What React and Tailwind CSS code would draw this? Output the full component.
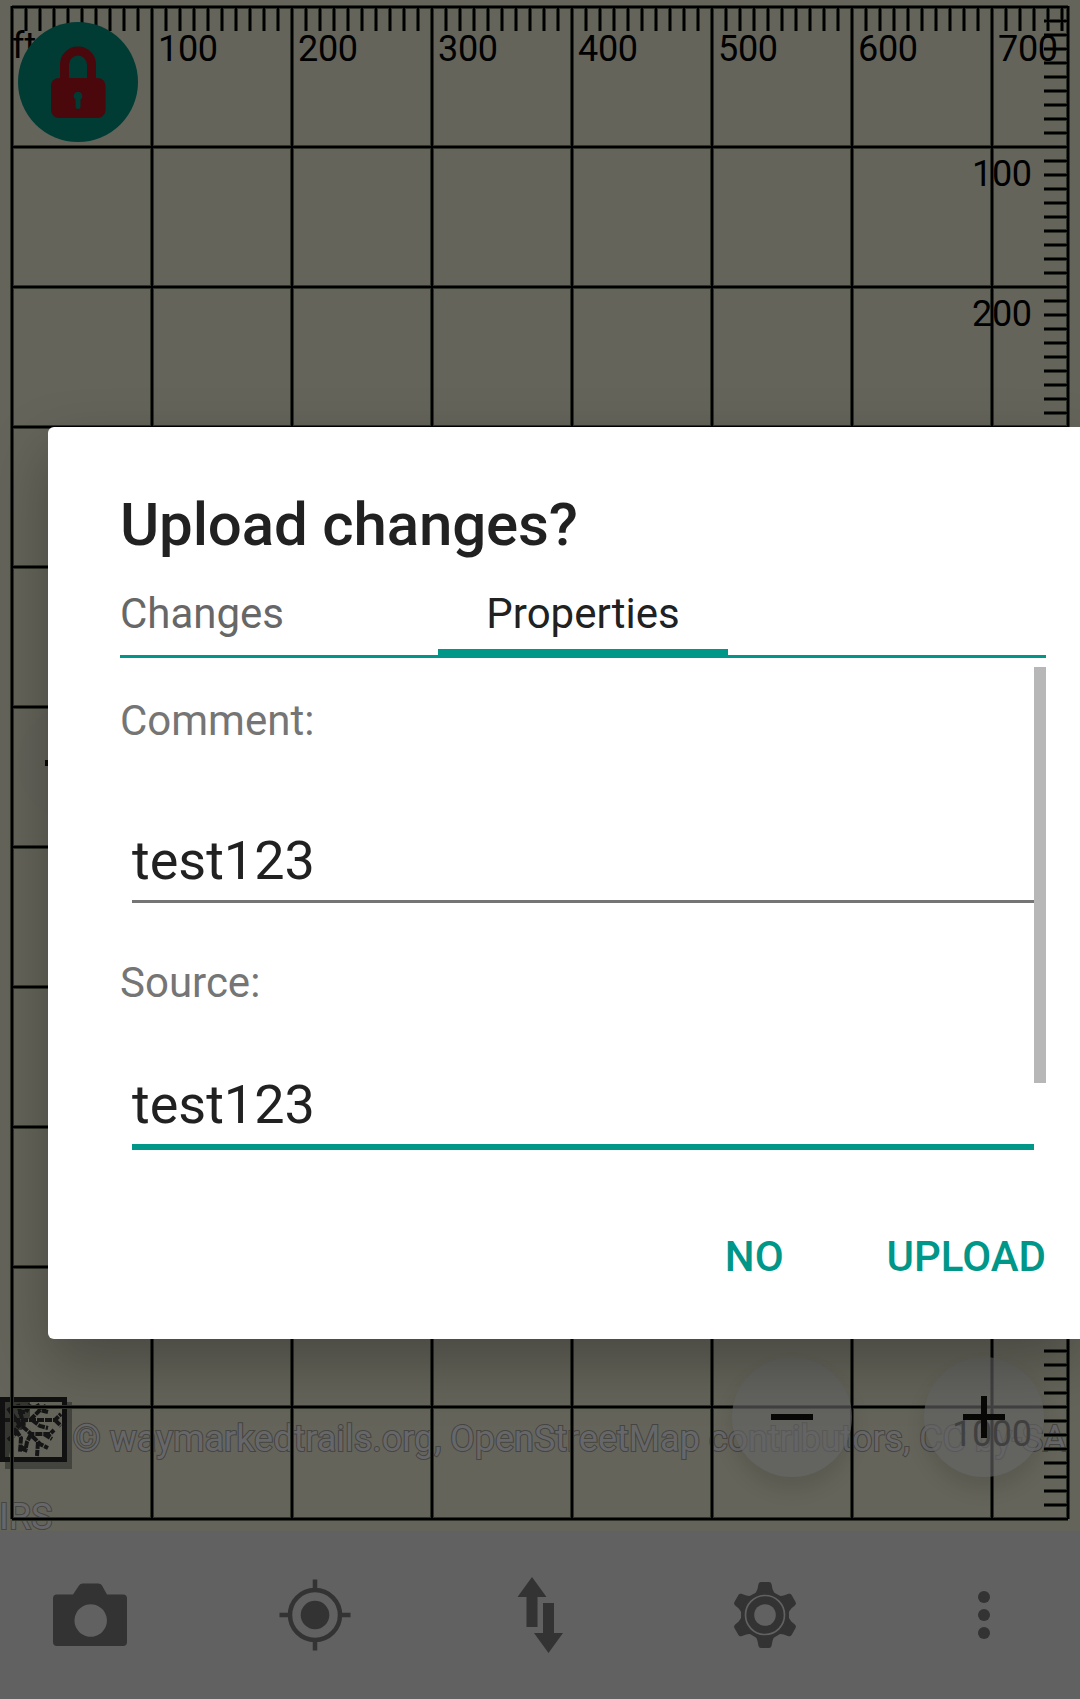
const LINE = "#000000";
const RIM = "#2f3229";
const range = (n) => Array.from({ length: n }, (_, i) => i);

const verticals = [...range(8).map((i) => 12 + i * 140), 1068];
const horizontals = [...range(11).map((i) => 7 + i * 140), 1519];
const topTicks = range(76).map((i) => 12 + i * 14);
const sideTicks = range(107)
  .map((i) => 21 + i * 14)
  .filter((y) => (y - 7) % 140 !== 0 && y < 1512);

const gridPath =
  verticals.map((x) => `M${x} 6V1519`).join("") + horizontals.map((y) => `M12 ${y}H1068`).join("");
const tickPath =
  topTicks.map((x) => `M${x} 7V31`).join("") + sideTicks.map((y) => `M1044 ${y}H1068`).join("");

function MapCanvas() {
  return (
    <svg className="block h-[1531px] w-[1080px]" viewBox="0 0 1080 1531" fontFamily="Roboto, sans-serif" fontSize="36">
      <rect width="1080" height="1531" fill="#64645a" />
      <g fill="#67676a" stroke="#454541" strokeWidth="2" paintOrder="stroke">
        <text x="72.500" y="1451" textLength="994" lengthAdjust="spacing">© waymarkedtrails.org, OpenStreetMap contributors, CC by-SA</text>
        <text x="-1" y="1529">IRS</text>
      </g>
      <Tree />
      <path d={gridPath} stroke={RIM} strokeWidth="4" fill="none" />
      <path d={tickPath} stroke={RIM} strokeWidth="4" fill="none" />
      <path d={gridPath} stroke={LINE} strokeWidth="2" fill="none" />
      <path d={tickPath} stroke={LINE} strokeWidth="2" fill="none" />
      <g fill="#000">
        <text x="12" y="58">ft</text>
        {range(7).map((i) => (
          <text key={i} x={158 + i * 140} y="61" textLength="60" lengthAdjust="spacing">{(i + 1) * 100}</text>
        ))}
        {[1, 2, 10].map((n) => (
          <text key={n} x={n === 10 ? 952 : 972} y={46 + n * 140} textLength={n === 10 ? 80 : 60} lengthAdjust="spacing">{n * 100}</text>
        ))}
      </g>
    </svg>
  );
}

function Tree() {
  return (
    <g fill="none">
      <rect x="5" y="1402" width="67" height="67" fill="#44443e" />
      <rect x="2.500" y="1399.500" width="62" height="60" fill="#64645a" stroke="#111" strokeWidth="5" />
      <path d="M5 1402H30V1416L22 1430L14 1430L9 1457H5Z" fill="#111" fillOpacity="0.550" />
      <path
        stroke="#151515"
        strokeWidth="4"
        strokeDasharray="7 1"
        d="M5 1420H55L61 1414M55 1420L61 1426M18 1412L26 1412L30 1404M30 1420L40 1410L48 1412M40 1410L37 1404M43 1411L46 1405M12 1434L20 1424L31 1434H50L54 1430M44 1434L52 1439M32 1420L40 1426L48 1428M16 1430L21 1438L20 1452M20 1446L27 1451M31 1434L27 1442L25 1452M32 1436L40 1444L48 1448M38 1442L37 1456M18 1404L24 1426M8 1408L22 1428M8 1440L18 1432"
      />
    </g>
  );
}

function LockButton() {
  return (
    <div className="absolute left-[18px] top-[22px] h-[120px] w-[120px] rounded-full bg-[#003b34]">
      <svg viewBox="0 0 120 120" className="h-full w-full">
        <path d="M46.500 58V42.500a13.500 13.500 0 0 1 27 0V58" fill="none" stroke="#4a070c" strokeWidth="9" />
        <rect x="33" y="56" width="54.500" height="40" rx="8" fill="#4a070c" />
        <circle cx="60" cy="74" r="4.300" fill="#003b34" />
        <path d="M60 74V84.500" stroke="#003b34" strokeWidth="5" strokeLinecap="round" />
      </svg>
    </div>
  );
}

function Fab({ look, children }) {
  return (
    <div className={`absolute flex h-[120px] w-[120px] items-center justify-center rounded-full ${look}`}>
      {children}
    </div>
  );
}

function BottomBar() {
  return (
    <nav className="h-[168px] bg-[#616161]">
      <svg viewBox="0 1531 1080 168" className="block h-[168px] w-[1080px]" fill="#333">
        <path fillRule="evenodd" d="M57 1594.500H73L79 1585.500Q80 1583.500 83 1583.500H98Q101 1583.500 102 1585.500L107 1594.500H123Q127 1594.500 127 1598.500V1642Q127 1646 123 1646H57Q53 1646 53 1642V1598.500Q53 1594.500 57 1594.500ZM90.700 1604.300a16.200 16.200 0 1 0 .01 0Z" />
        <circle cx="315" cy="1615" r="25" fill="none" stroke="#333" strokeWidth="4.500" />
        <circle cx="315" cy="1615" r="14.300" />
        <path d="M315 1579.500V1590M315 1640V1650.500M279.500 1615H290M340 1615H350.500" stroke="#333" strokeWidth="4.500" />
        <path d="M532 1577L546.500 1597H537.500V1627H526.500V1597H517.500ZM543 1603H554V1633H563L548.500 1653L534 1633H543Z" />
        <g transform="translate(765 1615)">
          {range(6).map((i) => (
            <path key={i} transform={`rotate(${i * 60})`} d="M-12 -20Q-8.500 -22 -7.500 -26L-6.500 -31Q-6 -33 -4 -33H4Q6 -33 6.500 -31L7.500 -26Q8.500 -22 12 -20L8 -12H-8Z" />
          ))}
          <circle r="24" />
          <circle r="19.500" fill="none" stroke="#616161" strokeWidth="1.700" />
          <circle r="10.800" fill="#616161" />
        </g>
        <circle cx="984" cy="1597" r="6" />
        <circle cx="984" cy="1615" r="6" />
        <circle cx="984" cy="1633" r="6" />
      </svg>
    </nav>
  );
}

function UploadDialog() {
  return (
    <section className="absolute left-[48px] top-[427px] h-[912px] w-[1032px] rounded-l-[6px] bg-white pl-[72px] pr-[34px] pt-[63px] text-[#212121] shadow-[0_24px_60px_rgba(0,0,0,0.28)]">
      <h1 className="h-[70px] text-[60px] font-medium leading-[70px] tracking-[-0.15px]">Upload changes?</h1>
      <div className="mt-[19px] flex h-[79px] border-b-[3px] border-[#009688] text-[42px]">
        <div className="w-[318px] pt-[10px] leading-[50px] text-[#676767]">Changes</div>
        <div className="-mb-[3px] w-[290px] border-b-[9px] border-[#009688] pt-[10px] text-center leading-[50px]">Properties</div>
      </div>
      <div className="relative mt-[9px] h-[492px] pt-[29px] text-[42px]">
        <div className="absolute right-0 top-0 h-[416px] w-[12px] bg-[#b7b7b7]" />
        <label className="block h-[50px] leading-[50px] text-[#757575]">Comment:</label>
        <div className="mx-[12px] mt-[78px] h-[79px] border-b-[3px] border-[#757575] pt-[5px] text-[54px] leading-[64px]">test123</div>
        <label className="mt-[55px] block h-[50px] leading-[50px] text-[#757575]">Source:</label>
        <div className="mx-[12px] mt-[60px] h-[82px] border-b-[6px] border-[#009688] pt-[5px] text-[54px] leading-[64px]">test123</div>
      </div>
      <div className="mt-[73px] flex justify-end gap-[103px] text-[42px] font-medium leading-[50px] text-[#009688]">
        <button>NO</button>
        <button>UPLOAD</button>
      </div>
    </section>
  );
}

export default function App() {
  return (
    <main className="relative h-[1699px] w-[1080px] overflow-hidden bg-[#616161] font-['Roboto',sans-serif]">
      <MapCanvas />
      <BottomBar />
      <LockButton />
      <Fab look="left-[18px] top-[703px] bg-[#626063]/10">
        <span className="h-[6px] w-[66px] bg-[#080806]" />
      </Fab>
      <Fab look="left-[732px] top-[1357px] bg-[#636262]/65 shadow-[0_12px_20px_rgba(0,0,0,0.11)]">
        <span className="h-[6px] w-[42px] bg-[#080806]" />
      </Fab>
      <Fab look="left-[924px] top-[1357px] bg-[#636262]/65 shadow-[0_12px_20px_rgba(0,0,0,0.11)]">
        <svg viewBox="0 0 42 42" className="h-[42px] w-[42px]">
          <path d="M0 21H42M21 0V42" stroke="#080806" strokeWidth="6" />
        </svg>
      </Fab>
      <UploadDialog />
    </main>
  );
}
